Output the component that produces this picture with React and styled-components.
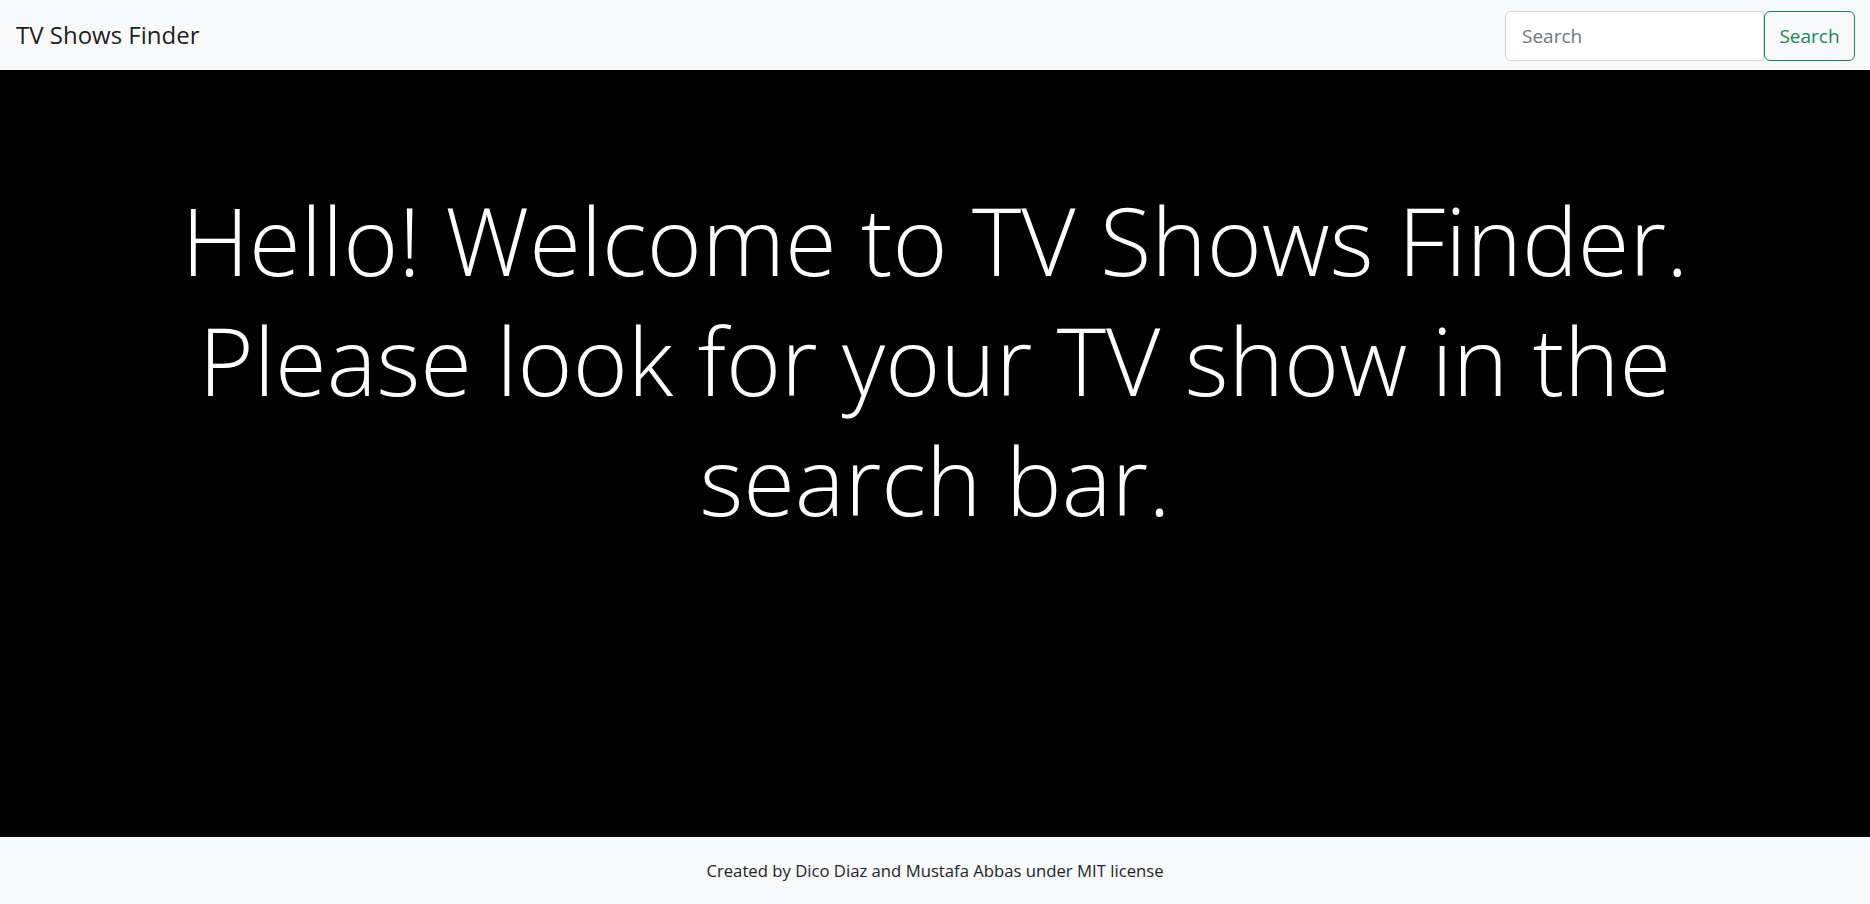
import styled, { createGlobalStyle } from 'styled-components';

const GlobalStyle = createGlobalStyle`
  html, body {
    margin: 0;
    padding: 0;
  }
  body {
    font-family: "Open Sans", "Noto Sans", sans-serif;
    color: #212529;
    background: #fff;
  }
  * {
    box-sizing: border-box;
  }
`;

const Page = styled.div`
  display: flex;
  flex-direction: column;
  min-height: 100vh;
`;

const NavBar = styled.nav`
  height: 70px;
  background: #f8f9fa;
  display: flex;
  align-items: center;
  justify-content: space-between;
  padding: 0 15px 0 16px;
`;

const Brand = styled.a`
  font-size: 24px;
  color: rgba(0, 0, 0, 0.9);
  text-decoration: none;
  padding-bottom: 2px;
`;

const SearchForm = styled.form`
  display: flex;
  align-items: stretch;
  height: 50px;
  margin-top: 1px;
`;

const SearchInput = styled.input`
  width: 259px;
  height: 100%;
  padding: 0 16px;
  font-family: inherit;
  font-size: 19px;
  color: #212529;
  background: #fff;
  border: 1px solid #ced4da;
  border-radius: 6px 0 0 6px;
  outline: none;

  &::placeholder {
    color: #6c757d;
  }
`;

const SearchButton = styled.button`
  width: 91px;
  height: 100%;
  padding: 0 12px;
  font-family: inherit;
  font-size: 19px;
  color: #198754;
  background: transparent;
  border: 1px solid #198754;
  border-radius: 6px;
  cursor: pointer;
`;

const Hero = styled.main`
  flex: 1;
  background: #000;
  color: #fff;
  padding-top: 110px;
`;

const Headline = styled.h1`
  margin: 0;
  text-align: center;
  font-size: 94px;
  font-weight: 300;
  line-height: 120px;
`;

const Footer = styled.footer`
  height: 67px;
  background: #f8f9fa;
  display: flex;
  align-items: center;
  justify-content: center;
  font-size: 16.7px;
  color: #212529;
`;

function App() {
  return (
    <Page>
      <GlobalStyle />
      <NavBar>
        <Brand href="#">TV Shows Finder</Brand>
        <SearchForm onSubmit={(e) => e.preventDefault()}>
          <SearchInput type="search" placeholder="Search" />
          <SearchButton type="submit">Search</SearchButton>
        </SearchForm>
      </NavBar>
      <Hero>
        <Headline>
          Hello! Welcome to TV Shows Finder.
          <br />
          Please look for your TV show in the
          <br />
          search bar.
        </Headline>
      </Hero>
      <Footer>Created by Dico Diaz and Mustafa Abbas under MIT license</Footer>
    </Page>
  );
}

export default App;
